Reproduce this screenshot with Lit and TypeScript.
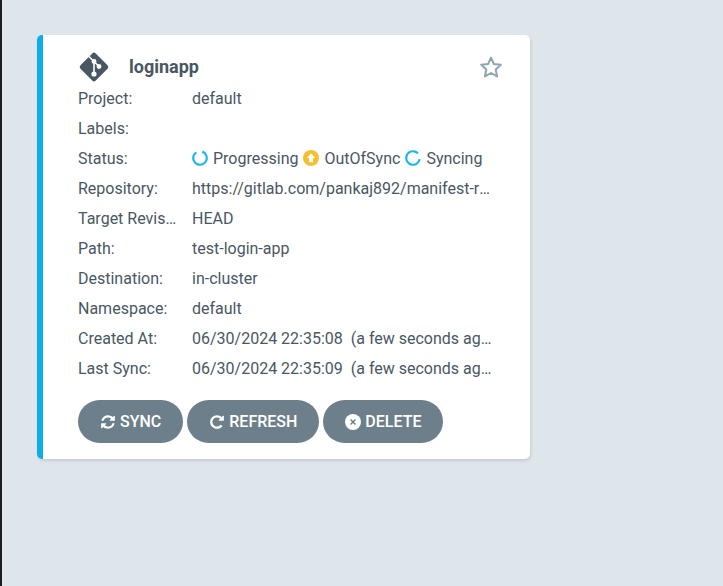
import { LitElement, css, html, svg } from "lit";
import { customElement } from "lit/decorators.js";

const REFRESH = "M1639 1056q0 5-1 7-64 268-268 434.5t-478 166.5q-146 0-282.5-55t-243.5-157l-129 129q-19 19-45 19t-45-19-19-45v-448q0-26 19-45t45-19h448q26 0 45 19t19 45-19 45l-137 137q71 66 161 102t187 36q134 0 250-65t186-179q11-17 53-117 8-23 30-23h192q13 0 22.5 9.5t9.5 22.5zm25-800v448q0 26-19 45t-45 19h-448q-26 0-45-19t-19-45 19-45l138-138q-148-137-349-137-134 0-250 65t-186 179q-11 17-53 117-8 23-30 23h-199q-13 0-22.5-9.5t-9.5-22.5v-7q65-268 270-434.5t480-166.5q146 0 284 55.5t245 156.5l130-129q19-19 45-19t45 19 19 45z";
const REDO = "M1664 256v448q0 26-19 45t-45 19h-448q-42 0-59-40-17-39 14-69l138-138q-148-137-349-137-104 0-198.5 40.5t-163.5 109.5-109.5 163.5-40.5 198.5 40.5 198.5 109.5 163.5 163.5 109.5 198.5 40.5q119 0 225-52t179-147q7-10 23-12 15 0 25 9l137 138q9 8 9.5 20.5t-7.5 22.5q-109 132-264 204.5t-327 72.5q-156 0-298-61t-245-164-164-245-61-298 61-298 164-245 245-164 298-61q147 0 284.5 55.5t244.5 156.5l130-129q29-31 70-14 39 17 39 59z";

const spinner = (rotate: number) => html`
    <svg class="status-icon" viewBox="0 0 16 16">
        <circle cx="8" cy="8" r="6.75" fill="none" stroke="#18be94" stroke-width="2.2"
            style="stroke:#1fb6ea" stroke-dasharray="36 6.4"
            transform="rotate(${rotate} 8 8)"></circle>
    </svg>`;

const rows: [string, unknown][] = [
    ["Project:", "default"],
    ["Labels:", ""],
    ["Status:", html`<span class="status">
        ${spinner(-70)}<span>Progressing</span>
        <svg class="status-icon" viewBox="0 0 16 16">
            <circle cx="8" cy="8" r="8" fill="#f4c030"></circle>
            <path d="M8 3.2 12.2 8H9.9v4.2H6.1V8H3.8z" fill="#fff"></path>
        </svg><span>OutOfSync</span>
        ${spinner(10)}<span>Syncing</span>
    </span>`],
    ["Repository:", "https://gitlab.com/pankaj892/manifest-repo.git"],
    ["Target Revision:", "HEAD"],
    ["Path:", "test-login-app"],
    ["Destination:", "in-cluster"],
    ["Namespace:", "default"],
    ["Created At:", html`06/30/2024 22:35:08 &nbsp;(a few seconds ago)`],
    ["Last Sync:", html`06/30/2024 22:35:09 &nbsp;(a few seconds ago)`],
];

const fa = (d: string) => svg`<svg class="btn-icon" viewBox="0 0 1792 1792"><path d=${d} fill="currentColor"></path></svg>`;

@customElement("app-root")
export class AppRoot extends LitElement {
    render() {return html`
        <div class="page">
            <div class="card">
                <div class="head">
                    <svg class="git" viewBox="0 0 32 32">
                        <rect x="5.2" y="5.2" width="21.6" height="21.6" rx="2.5" fill="#495763" transform="rotate(45 16 16)"></rect>
                        <path d="M11 5.5 16 10.5V23M16 10.5 21 15.5" fill="none" stroke="#fff" stroke-width="1.6"></path>
                        <circle cx="16" cy="10.5" r="2.4" fill="#fff"></circle>
                        <circle cx="21" cy="15.5" r="2.4" fill="#fff"></circle>
                        <circle cx="16" cy="23" r="2.6" fill="#fff"></circle>
                    </svg>
                    <span class="title">loginapp</span>
                    <svg class="star" viewBox="0 0 24 24">
                        <path d="M12 2.6 14.9 9l6.9.8-5.1 4.7 1.4 6.9L12 18l-6.100 3.400 1.400-6.900-5.100-4.700 6.900-.8z"
                            fill="none" stroke="#8fa4b1" stroke-width="2" stroke-linejoin="round"></path>
                    </svg>
                </div>
                ${rows.map(([label, value]) => html`
                    <div class="row">
                        <div class="label">${label}</div>
                        <div class="value">${value}</div>
                    </div>
                `)}
                <div class="actions">
                    <button>${fa(REFRESH)}SYNC</button>
                    <button>${fa(REDO)}REFRESH</button>
                    <button>
                        <svg class="btn-icon" viewBox="0 0 16 16">
                            <circle cx="8" cy="8" r="8" fill="#fff"></circle>
                            <path d="M5.600 5.600 10.400 10.400M10.400 5.600 5.600 10.400" stroke="#6d7f8b" stroke-width="1.400"></path>
                        </svg>DELETE
                    </button>
                </div>
            </div>
        </div>
    `}

    static styles = css`
        :host {
            display: block;
            height: 586px;
            overflow: hidden;
        }

        .page {
            height: 100%;
            box-sizing: border-box;
            padding: 35px 0 0 35px;
            background-color: #dee6eb;
            border-left: 2px solid #1c1c1c;
            font-family: Roboto, sans-serif;
            font-size: 16px;
            color: #495763;
        }

        .card {
            width: 493px;
            height: 424px;
            box-sizing: border-box;
            padding: 15px 35px 0 35px;
            background-color: white;
            border-left: 6px solid #0dadea;
            border-radius: 5px;
            box-shadow: 1px 2px 3px rgba(0, 0, 0, .1);
        }

        .head {
            display: flex;
            align-items: center;
            height: 33px;
        }

        .git {
            width: 32px;
            height: 32px;
            margin-right: 19px;
        }

        .title {
            flex: 1;
            font-size: 18px;
            font-weight: 700;
        }

        .star {
            width: 24px;
            height: 24px;
            margin-right: -8px;
        }

        .row {
            display: flex;
            align-items: center;
            height: 30px;
        }

        .label {
            width: 114px;
            flex: none;
            padding-right: 14px;
            box-sizing: border-box;
            white-space: nowrap;
            overflow: hidden;
            text-overflow: ellipsis;
        }

        .value {
            flex: 1;
            min-width: 0;
            white-space: nowrap;
            overflow: hidden;
            text-overflow: ellipsis;
        }

        .status {
            display: flex;
            align-items: center;
            gap: 5px;
        }

        .status-icon {
            width: 16px;
            height: 16px;
            flex: none;
        }

        .actions {
            display: flex;
            gap: 4px;
            margin-top: 17px;
        }

        button {
            display: flex;
            align-items: center;
            gap: 4px;
            height: 43px;
            padding: 0 22px;
            border: 0;
            border-radius: 22px;
            background-color: #6d7f8b;
            color: white;
            font: 500 16px Roboto, sans-serif;
        }

        .btn-icon {
            width: 16px;
            height: 16px;
        }
    `
}
